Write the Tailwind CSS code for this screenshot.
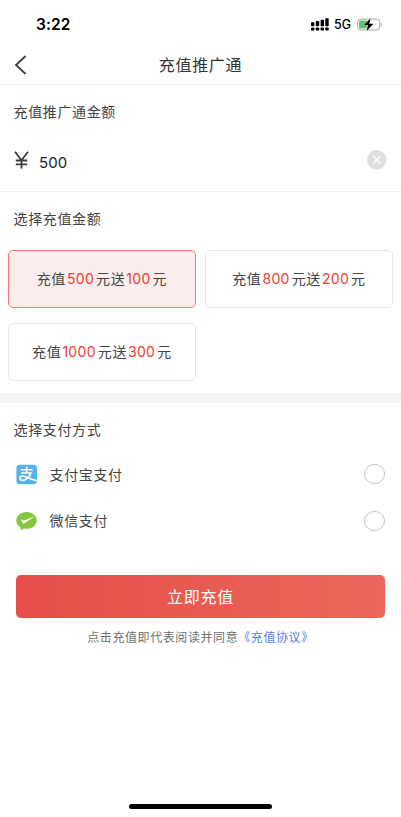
<!DOCTYPE html>
<html lang="zh-CN">
<head>
<meta charset="utf-8">
<title>充值推广通</title>
<script src="https://cdn.jsdelivr.net/npm/@tailwindcss/browser@4"></script>
</head>
<body class="bg-white">
<div class="flex h-[817px] w-[401px] flex-col overflow-hidden bg-white font-['Inter','Noto_Sans_CJK_SC',sans-serif] text-[14px] tracking-[0.63px] text-[#444]">
  <div class="flex h-[45px] shrink-0 items-center justify-between pt-[4px] pr-[17px] pl-[36px]">
    <span class="text-[15.5px] font-semibold tracking-[0.1px] text-black">3:22</span>
    <div class="flex items-center">
      <svg class="h-[13px] w-[18px]" viewBox="0 0 18 13" fill="#000"><rect x="0" y="4.2" width="3.4" height="4" rx=".8"/><rect x="4.8" y="3" width="3.4" height="5.2" rx=".8"/><rect x="9.6" y="1.8" width="3.4" height="6.4" rx=".8"/><rect x="14.3" y="0.3" width="3.4" height="7.9" rx=".8"/><rect x="0" y="9.4" width="3.4" height="3.2" rx=".9"/><rect x="4.8" y="9.4" width="3.4" height="3.2" rx=".9"/><rect x="9.6" y="9.4" width="3.4" height="3.2" rx=".9"/><rect x="14.3" y="9.4" width="3.4" height="3.2" rx=".9"/></svg>
      <span class="ml-[5px] w-[18px] pt-[2px] text-[12.5px] font-medium tracking-normal text-black">5G</span>
      <svg class="ml-[5px] h-[14px] w-[27px]" viewBox="0 0 27 14"><rect x=".6" y="1.100" width="22.3" height="10.8" rx="3.4" fill="#fff" stroke="#a5a5a5"/><path d="M4 2.500h6v8H4a2 2 0 0 1-2-2v-4a2 2 0 0 1 2-2z" fill="#62c466"/><path d="M24.3 4.800c1.2.4 1.2 3 0 3.4z" fill="#999"/><path d="M13.600.3L6.800 7.200h4.200l-1.400 5.800 6.900-7.300h-4.200z" fill="#000" stroke="#fff" stroke-width=".6" paint-order="stroke"/></svg>
    </div>
  </div>
  <header class="grid h-[40px] shrink-0 grid-cols-[60px_1fr_60px] items-center border-b border-[#efefef]">
    <svg class="ml-[14px] h-[20px] w-[13px]" viewBox="0 0 13 20" fill="none" stroke="#3d3d3d" stroke-width="1.8"><path d="M11.6 1L2 10l9.6 9"/></svg>
    <h1 class="text-center text-[16px] tracking-[0.7px] text-[#333]">充值推广通</h1>
  </header>
  <section class="h-[107px] shrink-0 border-b border-[#efefef] px-[14px] pt-[16px]">
    <h2 class="-ml-[0.5px] leading-[22px]">充值推广通金额</h2>
    <div class="mt-[22px] flex h-[30px] items-center">
      <svg class="h-[18px] w-[15px]" viewBox="0 0 15 18" fill="none" stroke="#3b3b3b" stroke-width="1.8"><path d="M1 .8l6.500 8.400L14 .8M7.500 9v8.500M1.800 9.500h11.400M1.800 13.400h11.400"/></svg>
      <span class="ml-[10px] pt-[6px] text-[15px] tracking-[0.1px] text-[#222]">500</span>
      <svg class="ml-auto h-[20px] w-[20px]" viewBox="0 0 20 20"><circle cx="9.700" cy="9.800" r="9.700" fill="#dedede"/><path d="M6 6l7.600 7.600M13.600 6L6 13.600" stroke="#fff" stroke-width="1.4"/></svg>
    </div>
  </section>
  <section class="h-[201px] shrink-0 pt-[16px]">
    <h2 class="px-[13.5px] leading-[22px]">选择充值金额</h2>
    <div class="mt-[20px] grid grid-cols-2 gap-x-[9px] gap-y-[15px] px-[8px]">
      <button class="flex h-[58px] items-center justify-center rounded-[5px] border border-[#ed7a73] bg-[#fceded] pb-[2px]">充值<span class="mr-[2px] ml-[1px] pt-px tracking-[0.3px] text-[#ea4033]">500</span>元送<span class="mr-[2px] ml-[1px] pt-px tracking-[0.3px] text-[#ea4033]">100</span>元</button>
      <button class="flex h-[58px] items-center justify-center rounded-[5px] border border-[#e8e8e8] pb-[2px]">充值<span class="mr-[2px] ml-[1px] pt-px tracking-[0.3px] text-[#ea4033]">800</span>元送<span class="mr-[2px] ml-[1px] pt-px tracking-[0.3px] text-[#ea4033]">200</span>元</button>
      <button class="flex h-[58px] items-center justify-center rounded-[5px] border border-[#e8e8e8] pb-[2px]">充值<span class="mr-[2px] ml-[1px] pt-px tracking-[0.3px] text-[#ea4033]">1000</span>元送<span class="mr-[2px] ml-[1px] pt-px tracking-[0.3px] text-[#ea4033]">300</span>元</button>
    </div>
  </section>
  <div class="h-[10px] shrink-0 bg-[#f4f4f4]"></div>
  <section class="shrink-0 px-[16px] pt-[16px]">
    <h2 class="-ml-[2.5px] leading-[22px]">选择支付方式</h2>
    <div class="mt-[10px] flex h-[46px] items-center">
      <svg class="h-[20px] w-[21px] translate-y-[0.5px]" viewBox="0 0 21 20"><rect x=".4" width="20.6" height="20" rx="4" fill="#57b1ea"/><g fill="none" stroke="#fff" stroke-linecap="round"><path d="M5.200 5.300h11M10.600 2.700v5.700M5.800 8.500h9.200" stroke-width="1.500"/><path d="M14.800 8.700c-1 3-3.200 5.200-5.700 6.500-2.400 1.200-5.100.6-5.200-1.400-.1-2 2.500-2.700 4.900-1.900 3.200 1.100 6.400 2.900 11.400 4.100" stroke-width="1.600"/></g></svg>
      <span class="ml-[12.5px]">支付宝支付</span>
      <span class="ml-auto h-[20px] w-[21px] rounded-full border border-[#c4c4c4]"></span>
    </div>
    <div class="mt-px flex h-[46px] items-center">
      <svg class="h-[20px] w-[21px]" viewBox="0 0 21 20"><path d="M10.5 1C4.700 1 .3 4.700.3 9.400c0 3 1.600 5.400 4.300 6.900l-.2 2.900 3.400-1.700c.9.2 1.800.300 2.700.300 5.800 0 10.200-3.700 10.200-8.400S16.300 1 10.500 1z" fill="#84c83d"/><path d="M5 8.300c.8-.5 1.600.5 2.900 1.300L18.800 5.300 8.200 12.400c-.7.400-1.200.1-1.500-.5z" fill="#fff"/></svg>
      <span class="-mt-px ml-[12.5px]">微信支付</span>
      <span class="ml-auto h-[20px] w-[21px] rounded-full border border-[#c4c4c4]"></span>
    </div>
    <button class="mt-[31px] h-[43px] w-full rounded-[5px] bg-linear-to-r from-[#e64e49] to-[#ea665a] text-[16px] tracking-[0.7px] text-white">立即充值</button>
    <p class="mt-[9px] text-center text-[12px] leading-[21px] tracking-[0.58px] whitespace-nowrap text-[#707070]">点击充值即代表阅读并同意<a class="text-[#5684df]">《充值协议》</a></p>
  </section>
  <div class="mx-auto mt-auto mb-[8px] h-[5px] w-[143px] shrink-0 rounded-full bg-black"></div>
</div>
</body>
</html>
